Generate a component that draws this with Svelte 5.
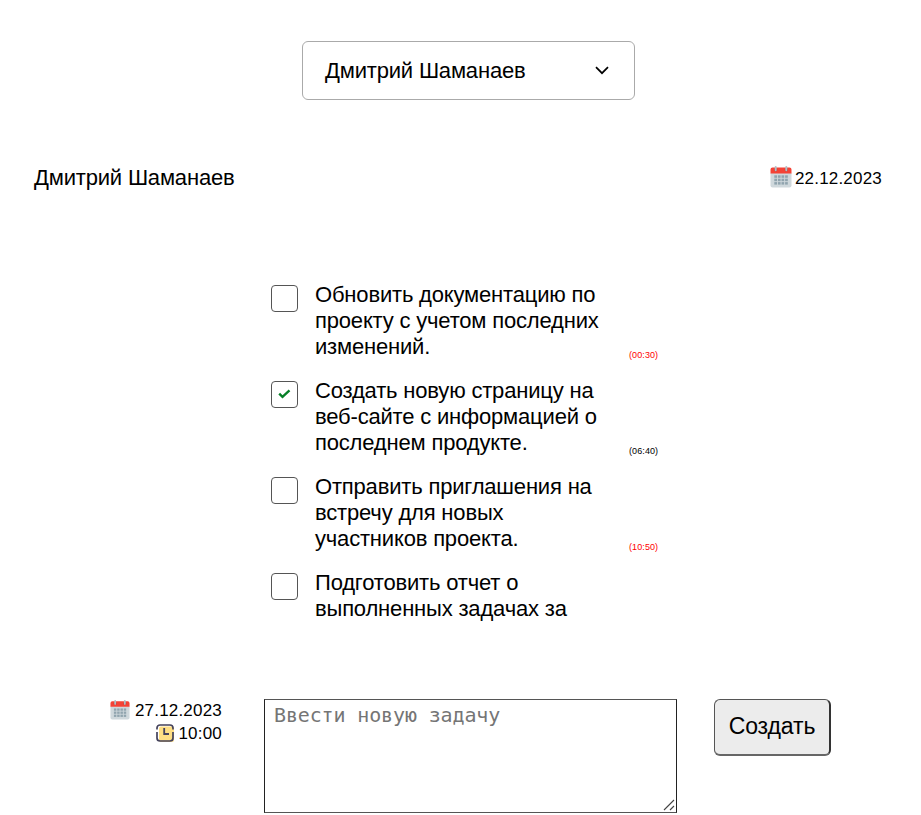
<script>
  const user = 'Дмитрий Шаманаев';
  let tasks = $state([
    { lines: ['Обновить документацию по', 'проекту с учетом последних', 'изменений.'], time: '00:30', done: false },
    { lines: ['Создать новую страницу на', 'веб-сайте с информацией о', 'последнем продукте.'], time: '06:40', done: true },
    { lines: ['Отправить приглашения на', 'встречу для новых', 'участников проекта.'], time: '10:50', done: false },
    { lines: ['Подготовить отчет о', 'выполненных задачах за'], time: '', done: false }
  ]);
</script>

{#snippet calendar(size)}
  <svg width={size} height={size} viewBox="0 0 22 22">
    <path d="M0.5 7h21v12.5a2 2 0 0 1-2 2h-17a2 2 0 0 1-2-2z" fill="#cfd8dc" />
    <path d="M0.5 7.500V3.500a2 2 0 0 1 2-2h17a2 2 0 0 1 2 2v4z" fill="#f44336" />
    <circle cx="5.700" cy="3.800" r="1.700" fill="#c93a35" />
    <circle cx="16.300" cy="3.800" r="1.700" fill="#c93a35" />
    <path d="M5.700 1v3.300M16.300 1v3.300" stroke="#b0bec5" stroke-width="2" stroke-linecap="round" />
    <g fill="#90a4ae">
      {#each [9.3, 12.7, 16.1] as y}
        {#each [4.3, 7.9, 11.5, 15.1] as x}
          <rect {x} {y} width="2.700" height="2.500" />
        {/each}
      {/each}
    </g>
  </svg>
{/snippet}

<main>
  <button class="select">
    <span>{user}</span>
    <svg width="14" height="9" viewBox="0 0 14 9"><path d="M1 1.200l6 6 6-6" fill="none" stroke="#000" stroke-width="1.700" /></svg>
  </button>

  <header>
    <span class="name">{user}</span>
    <span class="date">{@render calendar(22)}<span>22.12.2023</span></span>
  </header>

  <ul>
    {#each tasks as task}
      <li>
        <button class="check" aria-label="Готово" onclick={() => (task.done = !task.done)}>
          {#if task.done}
            <svg width="13" height="10" viewBox="0 0 13 10"><path d="M1.200 4.700l3.300 3.200 7-6.500" fill="none" stroke="#078028" stroke-width="2.400" /></svg>
          {/if}
        </button>
        <p>{#each task.lines as line}<span>{line}</span>{/each}</p>
        {#if task.time}<time class:late={!task.done}>({task.time})</time>{/if}
      </li>
    {/each}
  </ul>

  <footer>
    <div class="when">
      <div>{@render calendar(20)}<span>27.12.2023</span></div>
      <div class="hour">
        <svg width="18" height="18" viewBox="0 0 18 18">
          <rect x="3" y="2.500" width="15" height="15.500" rx="2" fill="#ffdf85" />
          <path d="M1 5.500V4a3 3 0 0 1 3-3h10a3 3 0 0 1 3 3v1.500M1 8v6a3 3 0 0 0 3 3h10a3 3 0 0 0 3-3V8" fill="none" stroke="#45435c" stroke-width="1.700" />
          <path d="M8.200 4v6h4.800" fill="none" stroke="#45435c" stroke-width="1.800" />
        </svg>
        <span>10:00</span>
      </div>
    </div>
    <div class="field">
      <textarea placeholder="Ввести новую задачу"></textarea>
      <svg class="grip" width="12" height="12" viewBox="0 0 12 12"><path d="M1 11L11 1M7 11l4-4" stroke="#444" stroke-width="1.100" /></svg>
    </div>
    <button class="create">Создать</button>
  </footer>
</main>

<style>
  :global(body) { background: #fff; overflow: hidden; }
  main {
    width: 921px;
    height: 815px;
    box-sizing: border-box;
    padding-top: 41px;
    overflow: hidden;
    font: 22px/26px "Liberation Sans", Arial, sans-serif;
    letter-spacing: -0.18px;
    color: #000;
  }
  button { font: inherit; color: inherit; letter-spacing: inherit; }
  svg { display: block; flex: none; }
  .select {
    display: flex;
    align-items: center;
    justify-content: space-between;
    box-sizing: border-box;
    width: 333px;
    height: 59px;
    margin-left: 302px;
    padding: 0 25px 0 22px;
    border: 1px solid #aaa;
    border-radius: 6px;
    background: #fff;
  }
  header {
    display: flex;
    justify-content: space-between;
    align-items: center;
    height: 26px;
    margin: 65px 39px 0 34px;
  }
  .date { display: flex; align-items: center; gap: 3px; font-size: 17px; letter-spacing: 0.2px; }
  .date svg { margin-bottom: 2px; }
  .date span { padding-top: 1px; }
  ul {
    width: 390px;
    height: 340px;
    margin: 91px 0 0 271px;
    padding: 0;
    overflow: hidden;
    list-style: none;
  }
  li { display: flex; height: 78px; margin-bottom: 18px; }
  .check {
    display: flex;
    align-items: center;
    justify-content: center;
    box-sizing: border-box;
    width: 27px;
    height: 27px;
    margin: 3px 17px 0 0;
    padding: 0 0 2px;
    border: 1px solid #555;
    border-radius: 4px;
    background: #fff;
  }
  p { width: 314px; margin: 0; white-space: nowrap; }
  p span { display: block; }
  time { align-self: flex-end; font-size: 9px; line-height: 10px; letter-spacing: 0.1px; white-space: nowrap; }
  .late { color: #f00; }
  footer { display: flex; align-items: flex-start; margin-top: 77px; }
  .when { width: 222px; font-size: 17px; line-height: 22px; letter-spacing: 0.2px; }
  .when div { display: flex; align-items: center; justify-content: flex-end; gap: 5px; height: 22px; }
  .when .hour { gap: 4px; padding-top: 1px; }
  .when span { padding-top: 2px; }
  .when .hour span { padding-top: 1px; }
  .field { position: relative; width: 413px; height: 114px; margin-left: 42px; }
  textarea {
    display: block;
    box-sizing: border-box;
    width: 100%;
    height: 100%;
    margin: 0;
    padding: 3px 9px;
    border: 1px solid #222;
    border-top-color: #555;
    border-bottom-color: #555;
    border-radius: 0;
    outline: 0;
    font: 20px/24px "DejaVu Sans Mono", monospace;
    letter-spacing: -0.14px;
    resize: none;
  }
  textarea::placeholder { color: #757575; }
  .grip { position: absolute; right: 2px; bottom: 2px; }
  .create {
    box-sizing: border-box;
    width: 117px;
    height: 57px;
    margin-left: 37px;
    padding: 0 0 2px;
    border: 1px solid #555;
    border-right: 2px solid #333;
    border-bottom: 2px solid #666;
    border-radius: 6px;
    background: #ececec;
    font-size: 23px;
    letter-spacing: -0.1px;
  }
</style>
